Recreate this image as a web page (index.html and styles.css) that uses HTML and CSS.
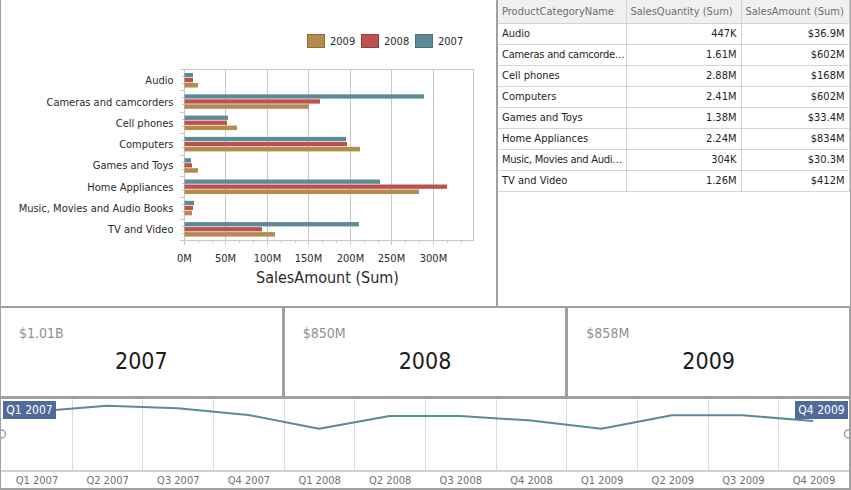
FILE: index.html
```html
<!DOCTYPE html>
<html>
<head>
<meta charset="utf-8">
<link rel="stylesheet" href="styles.css">
</head>
<body>
<div class="dash">
  <div class="top">
    <section class="chart-panel">
      <svg class="chart" width="495" height="306" viewBox="1 0 495 306">
        <g class="legend">
          <rect x="307.5" y="34.5" width="17" height="13" class="c09"/>
          <text x="330" y="45">2009</text>
          <rect x="361.5" y="34.5" width="17" height="13" class="c08"/>
          <text x="384" y="45">2008</text>
          <rect x="415.5" y="34.5" width="17" height="13" class="c07"/>
          <text x="438" y="45">2007</text>
        </g>
        <g class="grid-lines">
          <path d="M225.5 69.5V240.5M267.5 69.5V240.5M308.5 69.5V240.5M350.5 69.5V240.5M391.5 69.5V240.5M433.5 69.5V240.5"/>
          <rect x="184.5" y="69.5" width="289" height="171"/>
          <path d="M184.5 240.5V245M225.5 240.5V245M267.5 240.5V245M308.5 240.5V245M350.5 240.5V245M391.5 240.5V245M433.5 240.5V245M198.5 240.5V243M212.5 240.5V243M239.5 240.5V243M253.5 240.5V243M281.5 240.5V243M295.5 240.5V243M322.5 240.5V243M336.5 240.5V243M364.5 240.5V243M378.5 240.5V243M405.5 240.5V243M419.5 240.5V243M447.5 240.5V243M461.5 240.5V243"/>
          <path d="M180 69.5H184.5M180 90.5H184.5M180 112.5H184.5M180 133.5H184.5M180 155.5H184.5M180 176.5H184.5M180 197.5H184.5M180 219.5H184.5M180 240.5H184.5M182 76.5H184.5M182 83.5H184.5M182 97.5H184.5M182 104.5H184.5M182 119.5H184.5M182 126.5H184.5M182 140.5H184.5M182 147.5H184.5M182 162.5H184.5M182 169.5H184.5M182 183.5H184.5M182 190.5H184.5M182 204.5H184.5M182 211.5H184.5M182 226.5H184.5M182 233.5H184.5"/>
        </g>
        <g class="bars">
          <rect class="c07" x="184.5" y="73" width="8.5" height="4.3"/>
          <rect class="c08" x="184.5" y="78" width="8.5" height="4.3"/>
          <rect class="c09" x="184.5" y="83" width="13.5" height="4.5"/>

          <rect class="c07" x="184.5" y="94.3" width="239.5" height="4.3"/>
          <rect class="c08" x="184.5" y="99.3" width="135.5" height="4.3"/>
          <rect class="c09" x="184.5" y="104.3" width="124.2" height="4.5"/>

          <rect class="c07" x="184.5" y="115.6" width="43.5" height="4.3"/>
          <rect class="c08" x="184.5" y="120.6" width="42.5" height="4.3"/>
          <rect class="c09" x="184.5" y="125.6" width="52.5" height="4.5"/>

          <rect class="c07" x="184.5" y="136.9" width="161.5" height="4.3"/>
          <rect class="c08" x="184.5" y="141.9" width="162.5" height="4.3"/>
          <rect class="c09" x="184.5" y="146.9" width="175.5" height="4.5"/>

          <rect class="c07" x="184.5" y="158.2" width="6.5" height="4.3"/>
          <rect class="c08" x="184.5" y="163.2" width="7.5" height="4.3"/>
          <rect class="c09" x="184.5" y="168.2" width="13.5" height="4.5"/>

          <rect class="c07" x="184.5" y="179.5" width="195.5" height="4.3"/>
          <rect class="c08" x="184.5" y="184.5" width="262.5" height="4.3"/>
          <rect class="c09" x="184.5" y="189.5" width="234.5" height="4.5"/>

          <rect class="c07" x="184.5" y="200.8" width="9.5" height="4.3"/>
          <rect class="c08" x="184.5" y="205.8" width="8.5" height="4.3"/>
          <rect class="c09" x="184.5" y="210.8" width="7.5" height="4.5"/>

          <rect class="c07" x="184.5" y="222.1" width="174.5" height="4.3"/>
          <rect class="c08" x="184.5" y="227.1" width="77.5" height="4.3"/>
          <rect class="c09" x="184.5" y="232.1" width="90.5" height="4.5"/>
        </g>
        <g class="cat-labels">
          <text x="173.5" y="84.2">Audio</text>
          <text x="173.5" y="105.5">Cameras and camcorders</text>
          <text x="173.5" y="126.8">Cell phones</text>
          <text x="173.5" y="148.1">Computers</text>
          <text x="173.5" y="169.4">Games and Toys</text>
          <text x="173.5" y="190.7">Home Appliances</text>
          <text x="173.5" y="212">Music, Movies and Audio Books</text>
          <text x="173.5" y="233.3">TV and Video</text>
        </g>
        <g class="val-labels">
          <text x="184.5" y="261.5">0M</text>
          <text x="225.5" y="261.5">50M</text>
          <text x="267.5" y="261.5">100M</text>
          <text x="308.5" y="261.5">150M</text>
          <text x="350.5" y="261.5">200M</text>
          <text x="391.5" y="261.5">250M</text>
          <text x="433.5" y="261.5">300M</text>
        </g>
        <text class="axis-title" x="327.5" y="283">SalesAmount (Sum)</text>
      </svg>
    </section>
    <section class="grid-panel">
      <table class="grid">
        <colgroup><col class="col-name"><col class="col-qty"><col class="col-amt"></colgroup>
        <thead>
          <tr><th>ProductCategoryName</th><th>SalesQuantity (Sum)</th><th>SalesAmount (Sum)</th></tr>
        </thead>
        <tbody>
          <tr><td>Audio</td><td class="num">447K</td><td class="num">$36.9M</td></tr>
          <tr><td class="tight">Cameras and camcorde…</td><td class="num">1.61M</td><td class="num">$602M</td></tr>
          <tr><td>Cell phones</td><td class="num">2.88M</td><td class="num">$168M</td></tr>
          <tr><td>Computers</td><td class="num">2.41M</td><td class="num">$602M</td></tr>
          <tr><td>Games and Toys</td><td class="num">1.38M</td><td class="num">$33.4M</td></tr>
          <tr><td>Home Appliances</td><td class="num">2.24M</td><td class="num">$834M</td></tr>
          <tr><td class="tight">Music, Movies and Audi…</td><td class="num">304K</td><td class="num">$30.3M</td></tr>
          <tr><td>TV and Video</td><td class="num">1.26M</td><td class="num">$412M</td></tr>
        </tbody>
      </table>
    </section>
  </div>
  <div class="cards">
    <div class="card"><div class="card-sub">$1.01B</div><div class="card-main">2007</div></div>
    <div class="card"><div class="card-sub">$850M</div><div class="card-main">2008</div></div>
    <div class="card"><div class="card-sub">$858M</div><div class="card-main">2009</div></div>
  </div>
  <div class="range">
    <svg class="range-svg" width="848" height="89" viewBox="1 399 848 89">
      <path class="r-grid" d="M72.5 399V470M142.5 399V470M213.5 399V470M284.5 399V470M354.5 399V470M425.5 399V470M496.5 399V470M566.5 399V470M637.5 399V470M708.5 399V470M778.5 399V470"/>
      <path class="r-axis" d="M1 471H849"/>
      <polyline class="r-line" points="36.5,411.5 107.1,405.7 177.7,408.3 248.3,415 318.9,428.7 389.5,416 460.1,416 530.7,420.5 601.3,428.7 671.9,415.3 742.5,415.3 813.1,421"/>
      <g class="r-labels">
        <text x="37" y="484">Q1 2007</text>
        <text x="107.6" y="484">Q2 2007</text>
        <text x="178.3" y="484">Q3 2007</text>
        <text x="248.9" y="484">Q4 2007</text>
        <text x="319.6" y="484">Q1 2008</text>
        <text x="390.2" y="484">Q2 2008</text>
        <text x="460.8" y="484">Q3 2008</text>
        <text x="531.5" y="484">Q4 2008</text>
        <text x="602.1" y="484">Q1 2009</text>
        <text x="672.8" y="484">Q2 2009</text>
        <text x="743.4" y="484">Q3 2009</text>
        <text x="814" y="484">Q4 2009</text>
      </g>
      <circle class="r-handle" cx="1.5" cy="434" r="4"/>
      <circle class="r-handle" cx="848.5" cy="434" r="4"/>
      <rect class="r-tag" x="3" y="401" width="53" height="18"/>
      <text class="r-tag-text" x="29.5" y="414">Q1 2007</text>
      <rect class="r-tag" x="795" y="401" width="53" height="18"/>
      <text class="r-tag-text" x="821.5" y="414">Q4 2009</text>
    </svg>
  </div>
</div>
</body>
</html>
```

FILE: styles.css
```css
* { box-sizing: border-box; }
html, body { margin: 0; padding: 0; background: #fff; }
body {
  font-family: "DejaVu Sans Condensed", "DejaVu Sans", sans-serif;
  font-size: 11px;
  color: #222;
}
.dash {
  width: 851px;
  height: 490px;
  background: #a0a0a0;
  display: flex;
  flex-direction: column;
  padding: 0 2px 2px 1px;
}
.top {
  display: flex;
  gap: 2px;
  height: 306px;
  flex: none;
}
.chart-panel {
  width: 495px;
  flex: none;
  background: #fff;
}
.chart { display: block; }
.chart text { font-size: 11px; fill: #2a2a2a; }
.legend text { font-size: 11px; }
.c07 { fill: #5b8b94; }
.c08 { fill: #c0504d; }
.c09 { fill: #b38b4f; }
.legend .c07 { stroke: #46737b; }
.legend .c08 { stroke: #9a3b39; }
.legend .c09 { stroke: #8e6d3b; }
.grid-lines path, .grid-lines rect { fill: none; stroke: #c8c8c8; stroke-width: 1; }
.cat-labels text { text-anchor: end; }
.val-labels text { text-anchor: middle; }
.chart .axis-title { font-size: 16px; text-anchor: middle; fill: #2a2a2a; }

.grid-panel {
  flex: 1;
  background: #fff;
}
.grid {
  border-collapse: collapse;
  table-layout: fixed;
  width: 351px;
}
.col-name { width: 128px; }
.col-qty { width: 115px; }
.col-amt { width: 108px; }
.grid th, .grid td {
  padding: 0 4px;
  border-right: 1px solid #d4d4d4;
  border-bottom: 1px solid #d4d4d4;
  white-space: nowrap;
  overflow: hidden;
  font-weight: normal;
  text-align: left;
}
.grid td.tight {
  padding-right: 0;
  letter-spacing: -0.25px;
}
.grid th {
  height: 23px;
  background: #f0f0f0;
  color: #6e6e6e;
}
.grid td {
  height: 21px;
  color: #1e1e1e;
}
.grid td.num { text-align: right; }

.cards {
  display: flex;
  gap: 3px;
  height: 88px;
  margin-top: 2px;
  flex: none;
}
.card {
  flex: 1;
  background: #fff;
  padding: 17px 18px 0;
}
.card-sub {
  font-size: 14px;
  line-height: 16px;
  color: #919191;
}
.card-main {
  margin-top: 5px;
  font-size: 23px;
  line-height: 30px;
  text-align: center;
  color: #1c1c1c;
}

.range {
  margin-top: 3px;
  height: 89px;
  background: #fff;
  flex: none;
}
.range-svg { display: block; }
.r-grid { stroke: #dcdcdc; stroke-width: 1; fill: none; }
.r-axis { stroke: #d0d0d0; stroke-width: 2; fill: none; }
.r-line { fill: none; stroke: #5b8b94; stroke-width: 2; stroke-linejoin: round; }
.r-labels text { font-size: 11px; fill: #69717c; text-anchor: middle; }
.r-handle { fill: #fff; stroke: #a0a0a0; stroke-width: 1.5; }
.r-tag { fill: #4f6b9b; }
.r-tag-text { font-size: 12px; fill: #fff; text-anchor: middle; }
```
